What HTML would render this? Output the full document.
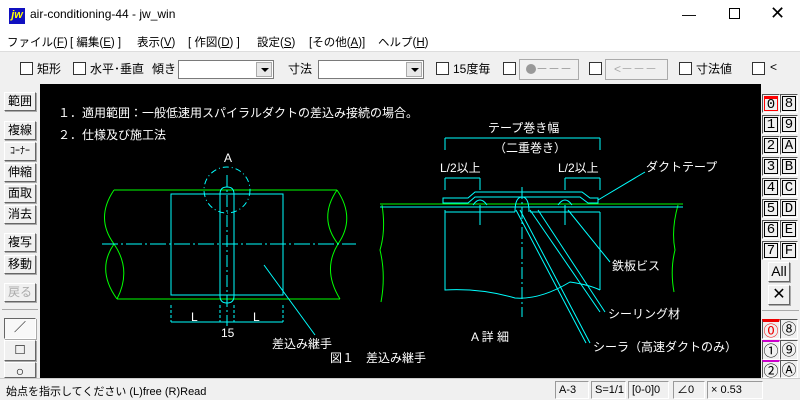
<!DOCTYPE html>
<html><head><meta charset="utf-8">
<style>
*{margin:0;padding:0;box-sizing:border-box}
body{width:800px;height:400px;overflow:hidden;background:#f0f0f0;font-family:"Liberation Sans","Noto Sans CJK JP",sans-serif;font-size:12px;color:#000;position:relative}
.abs{position:absolute}
.title{left:0;top:0;width:800px;height:31px;background:#fff}
.menu{left:0;top:31px;width:800px;height:20px;background:#fff;font-size:11.5px}
.menu span{position:absolute;top:3px;white-space:nowrap}
.tb{left:0;top:51px;width:800px;height:33px;background:#f0f0f0;border-top:1px solid #ddd}
.cb{position:absolute;width:13px;height:13px;border:1px solid #333;background:#fff}
.combo{position:absolute;height:19px;background:#fff;border:1px solid #7a7a7a}
.combo i{position:absolute;right:1px;top:1px;width:16px;height:15px;background:#e8e8e8;border:1px solid #aaa}
.combo i:after{content:"";position:absolute;left:4px;top:5px;border:4px solid transparent;border-top:4px solid #000}
.lb{position:absolute;left:4px;width:32px;height:19px;background:#f0f0f0;border:1px solid;border-color:#fff #666 #666 #fff;box-shadow:1px 1px 0 #aaa;font-size:12px;text-align:center;line-height:17px}
.rb{position:absolute;width:18px;height:19px;background:#f0f0f0;border:1px solid;border-color:#555 #fff #fff #555;padding:1px}
.rb span{display:block;border:1px solid #000;width:14px;height:15px;line-height:14px;font-family:"Liberation Mono",monospace;font-size:14px;text-align:center;background:#f0f0f0}
.cr{position:absolute;width:18px;height:20px;font-size:15px;text-align:center;line-height:20px;border:1px solid;border-color:#555 #fff #fff #555}
.status{left:0;top:378px;width:800px;height:22px;background:#f0f0f0;border-top:1px solid #ccc}
.sp{position:absolute;top:2px;height:18px;border:1px solid;border-color:#999 #fff #fff #999;font-size:11px;line-height:16px;padding-left:3px}
svg text{font-family:"Liberation Sans","Noto Sans CJK JP",sans-serif}
</style></head><body>
<div class="abs title">
 <div class="abs" style="left:9px;top:8px;width:16px;height:16px;background:#1010c0;color:#ff0;font-weight:bold;font-style:italic;font-size:11px;line-height:15px;text-align:center">jw</div>
 <div class="abs" style="left:30px;top:7px;font-size:12px">air-conditioning-44 - jw_win</div>
 <div class="abs" style="left:682px;top:6px;font-size:14px">—</div>
 <div class="abs" style="left:729px;top:8px;width:11px;height:11px;border:1px solid #000"></div>
 <div class="abs" style="left:770px;top:3px;font-size:18px">✕</div>
</div>
<div class="abs menu">
 <span style="left:7px">ファイル(<u>F</u>)</span><span style="left:70px">[ 編集(<u>E</u>) ]</span><span style="left:137px">表示(<u>V</u>)</span><span style="left:188px">[ 作図(<u>D</u>) ]</span><span style="left:257px">設定(<u>S</u>)</span><span style="left:309px">[その他(<u>A</u>)]</span><span style="left:378px">ヘルプ(<u>H</u>)</span>
</div>
<div class="abs tb">
 <div class="cb" style="left:20px;top:10px"></div><span class="abs" style="left:37px;top:8px">矩形</span>
 <div class="cb" style="left:73px;top:10px"></div><span class="abs" style="left:90px;top:8px">水平･垂直</span>
 <span class="abs" style="left:152px;top:8px">傾き</span>
 <div class="combo" style="left:178px;top:8px;width:96px"><i></i></div>
 <span class="abs" style="left:288px;top:8px">寸法</span>
 <div class="combo" style="left:318px;top:8px;width:106px"><i></i></div>
 <div class="cb" style="left:436px;top:10px"></div><span class="abs" style="left:453px;top:8px">15度毎</span>
 <div class="cb" style="left:503px;top:10px"></div>
 <div class="abs" style="left:519px;top:7px;width:60px;height:21px;border:1px solid #aaa;color:#999;font-size:12px;line-height:19px;padding-left:6px"><span style="display:inline-block;width:10px;height:10px;border-radius:5px;background:#999;vertical-align:-1px"></span>－－－</div>
 <div class="cb" style="left:589px;top:10px"></div>
 <div class="abs" style="left:605px;top:7px;width:63px;height:21px;border:1px solid #aaa;color:#aaa;line-height:19px;padding-left:8px">&lt;－－－</div>
 <div class="cb" style="left:679px;top:10px"></div><span class="abs" style="left:696px;top:8px">寸法値</span>
 <div class="cb" style="left:752px;top:10px"></div><span class="abs" style="left:770px;top:8px">&lt;</span>
</div>
<div class="abs" style="left:40px;top:84px;width:721px;height:294px;background:#000"></div>
<!-- left panel -->
<div class="lb" style="top:92px">範囲</div>
<div class="lb" style="top:121px">複線</div>
<div class="lb" style="top:142px;font-size:10px">ｺｰﾅｰ</div>
<div class="lb" style="top:163px">伸縮</div>
<div class="lb" style="top:184px">面取</div>
<div class="lb" style="top:205px">消去</div>
<div class="lb" style="top:233px">複写</div>
<div class="lb" style="top:255px">移動</div>
<div class="lb" style="top:283px;color:#aaa">戻る</div>
<div class="abs" style="left:2px;top:309px;width:36px;border-top:1px solid #aaa"></div>
<div class="lb" style="top:318px;height:21px;background:#f8f8f8;border-color:#666 #fff #fff #666">／</div>
<div class="lb" style="top:340px;height:21px;font-size:15px">□</div>
<div class="lb" style="top:362px;height:16px;font-size:14px;line-height:16px">○</div>
<!-- right panel -->
<div class="abs" style="left:761px;top:84px;width:39px;height:294px;background:#f0f0f0"></div>
<div class="rb" style="left:762px;top:94px"><span style="border-color:#f00;border-top:3px solid #f00;line-height:12px">0</span></div><div class="rb" style="left:780px;top:94px"><span>8</span></div>
<div class="rb" style="left:762px;top:115px"><span>1</span></div><div class="rb" style="left:780px;top:115px"><span>9</span></div>
<div class="rb" style="left:762px;top:136px"><span>2</span></div><div class="rb" style="left:780px;top:136px"><span>A</span></div>
<div class="rb" style="left:762px;top:157px"><span>3</span></div><div class="rb" style="left:780px;top:157px"><span>B</span></div>
<div class="rb" style="left:762px;top:178px"><span>4</span></div><div class="rb" style="left:780px;top:178px"><span>C</span></div>
<div class="rb" style="left:762px;top:199px"><span>5</span></div><div class="rb" style="left:780px;top:199px"><span>D</span></div>
<div class="rb" style="left:762px;top:220px"><span>6</span></div><div class="rb" style="left:780px;top:220px"><span>E</span></div>
<div class="rb" style="left:762px;top:241px"><span>7</span></div><div class="rb" style="left:780px;top:241px"><span>F</span></div>
<div class="lb" style="left:768px;top:262px;width:22px;height:20px;font-size:14px">All</div>
<div class="lb" style="left:768px;top:285px;width:22px;height:20px;font-size:16px">✕</div>
<div class="abs" style="left:762px;top:310px;width:37px;border-top:1px solid #aaa"></div>
<div class="cr" style="left:762px;top:319px;color:#e00;border-top:3px solid #e00">⓪</div><div class="cr" style="left:780px;top:319px">⑧</div>
<div class="cr" style="left:762px;top:340px;border-top:2px solid #c0c">①</div><div class="cr" style="left:780px;top:340px">⑨</div>
<div class="cr" style="left:762px;top:360px;height:18px;border-top:2px solid #c0c">②</div><div class="cr" style="left:780px;top:360px;height:18px">Ⓐ</div>
<!-- drawing -->
<svg class="abs" style="left:0;top:0" width="800" height="400" fill="none" stroke-width="1">
<g fill="#fff" stroke="none" font-size="12">
<text x="58" y="117">１．適用範囲：一般低速用スパイラルダクトの差込み接続の場合。</text>
<text x="58" y="139">２．仕様及び施工法</text>
<text x="224" y="162">A</text>
<text x="191" y="321">L</text><text x="253" y="321">L</text>
<text x="221" y="337">15</text>
<text x="272" y="348">差込み継手</text>
<text x="330" y="362">図１　差込み継手</text>
<text x="488" y="132">テープ巻き幅</text>
<text x="494" y="152">（二重巻き）</text>
<text x="440" y="172">L/2以上</text><text x="558" y="172">L/2以上</text>
<text x="646" y="171">ダクトテープ</text>
<text x="612" y="270">鉄板ビス</text>
<text x="608" y="318">シーリング材</text>
<text x="593" y="351">シーラ（高速ダクトのみ）</text>
<text x="471" y="341">A 詳 細</text>
</g>
<g stroke="#00ff00">
<line x1="114" y1="190" x2="337" y2="190"/><line x1="117" y1="299" x2="340" y2="299"/>
<path d="M114 190 Q95 218 114 244 Q132 270 117 299"/>
<path d="M114 244 Q96 270 117 299"/>
<path d="M337 190 Q356 218 338 244 Q322 270 340 299"/>
<path d="M337 190 Q318 218 338 244"/>
<path d="M382 205 Q386 230 380 250 Q386 275 381 302"/>
<path d="M678 205 Q671 230 675 250 Q670 270 674 292"/>
<line x1="380" y1="204" x2="683" y2="204"/>
</g>
<g stroke="#00ffff">
<rect x="171" y="194" width="112" height="101"/>
<path d="M220 194 Q220 187 227 187 Q234 187 234 194 L234 296 Q234 303 227 303 Q220 303 220 296 Z"/>
<circle cx="227" cy="190" r="23" stroke-dasharray="6,3,1,3"/>
<line x1="102" y1="244" x2="356" y2="244" stroke-dasharray="16,3,2,3"/>
<line x1="227" y1="175" x2="227" y2="326" stroke-dasharray="12,3,2,3"/>
<line x1="171" y1="322" x2="283" y2="322"/>
<path d="M171 305V322M220 305V322M234 305V322M283 305V322" stroke-dasharray="3,2"/>
<line x1="264" y1="265" x2="315" y2="335"/>
<line x1="445" y1="138" x2="600" y2="138"/>
<path d="M445 138V150M600 138V150M445 178H480M565 178H600M445 178V190M480 178V190M565 178V190M600 178V190"/>
<line x1="380" y1="207" x2="683" y2="207"/>
<path d="M443 203L443 198L468 198L475 192L582 192L590 198L598 198L598 203L588 203L580 197L475 197L468 203Z"/>
<path d="M445 212H515M530 212H600M445 212V290M600 212V290M445 210L445 290Q480 288 515 298Q540 300 570 282Q590 285 600 290"/>
<path d="M515 212Q515 197 522 197Q529 197 529 212" />
<line x1="522" y1="187" x2="522" y2="317" stroke-dasharray="12,3,2,3"/>
<path d="M480 205V225M565 205V225"/>
<path d="M473 205Q480 195 487 205M558 205Q565 195 572 205"/>
<line x1="598" y1="200" x2="645" y2="172"/>
<line x1="568" y1="210" x2="610" y2="262"/>
<line x1="538" y1="210" x2="605" y2="312"/>
<line x1="530" y1="210" x2="600" y2="312"/>
<line x1="520" y1="210" x2="590" y2="343"/>
<line x1="516" y1="210" x2="586" y2="343"/>
</g>
</svg>
<!-- status -->
<div class="abs status">
 <span class="abs" style="left:6px;top:4px;font-size:11px">始点を指示してください (L)free (R)Read</span>
 <div class="sp" style="left:555px;width:34px">A-3</div>
 <div class="sp" style="left:591px;width:35px">S=1/1</div>
 <div class="sp" style="left:628px;width:41px">[0-0]0</div>
 <div class="sp" style="left:673px;width:32px">∠0</div>
 <div class="sp" style="left:707px;width:56px">× 0.53</div>
</div>
</body></html>
